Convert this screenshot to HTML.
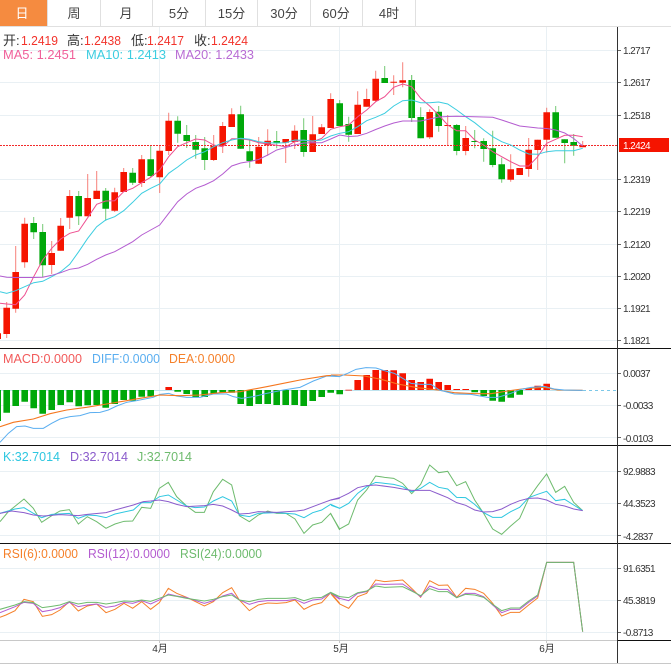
<!DOCTYPE html>
<html><head><meta charset="utf-8"><style>
html,body{margin:0;padding:0;background:#fff;width:671px;height:672px;overflow:hidden}
svg{display:block;font-family:"Liberation Sans","Noto Sans CJK SC",sans-serif}
.ax text{font-size:10px;letter-spacing:-.6px;fill:#333}
.l{fill:none;stroke-width:1}
</style></head><body>
<svg width="671" height="672" viewBox="0 0 671 672" xmlns="http://www.w3.org/2000/svg">
<rect width="671" height="672" fill="#fff"/>
<!-- tabs -->
<rect x="0" y="0" width="47" height="26" fill="#f58b40"/>
<path d="M47.5 0V26M100.5 0V26M152.5 0V26M205.5 0V26M257.5 0V26M310.5 0V26M362.5 0V26M415.5 0V26M0 26.5H671" stroke="#e0e0e0" fill="none"/>
<g font-size="13" fill="#444" text-anchor="middle">
<text x="22" y="18" fill="#fff">日</text><text x="74" y="18">周</text><text x="126" y="18">月</text><text x="179" y="18">5分</text><text x="231.5" y="18">15分</text><text x="284" y="18">30分</text><text x="336" y="18">60分</text><text x="389" y="18">4时</text>
</g>
<!-- grid -->
<path d="M0 50.5H617M0 82.5H617M0 115.5H617M0 179.5H617M0 211.5H617M0 244.5H617M0 276.5H617M0 308.5H617M0 340.5H617M0 373.5H617M0 405.5H617M0 437.5H617M0 471.5H617M0 503.5H617M0 535.5H617M0 568.5H617M0 600.5H617M0 632.5H617M159.5 27V640M339.5 27V640M546.5 27V640" stroke="#e9f0f4" fill="none"/>
<!-- candles -->
<path fill="none" stroke="#f4574f" stroke-width="1" opacity=".75" d="M6.7 302V338M15.7 246V312.7M24.7 217.7V267.7M51.7 241V274M60.7 218V250.7M69.7 190V229M87.7 174V216.3M96.7 171V199M114.7 187.7V212M123.7 168V192M141.7 155V187M159.7 145V193M168.7 112.7V155M213.7 135V161M222.7 122V153M231.7 108.3V127M258.7 137V164M267.7 129.3V155.7M285.7 139V163M294.7 125.3V149M312.7 116V152M321.7 124V134M330.7 93.3V128M357.7 91.3V134M366.7 88.7V106.7M375.7 70.7V101.7M393.7 75.3V95M402.7 62.3V87.3M429.7 109.3V139M447.7 115V145.3M465.7 126V155.3M510.7 154.3V181.7M528.7 138V176.7M537.7 139.7V170M546.7 107.7V152.7M582.7 141V147.3"/>
<path fill="none" stroke="#5cc05c" stroke-width="1" opacity=".85" d="M33.7 217V239M42.7 224V277.3M78.7 191V225M105.7 188V220.7M132.7 168V185M150.7 145.3V177M177.7 116.3V142.7M186.7 125V148M195.7 135V158.7M204.7 137V170M240.7 105.7V149M249.7 140V167.7M276.7 131V148.3M303.7 118.3V156.7M339.7 100V126M348.7 116.7V141.7M384.7 66V83M420.7 107.3V138.3M438.7 106V131.7M456.7 124V155.3M474.7 130V148.3M483.7 138.3V161.7M492.7 130.7V167.3M501.7 157.7V182.7M555.7 106V137.7M564.7 139.3V163.3M573.7 134V155.7"/>
<path fill="none" stroke="#f51400" stroke-width="6.6" d="M-2.3 333.3V339M6.7 307.7V334M15.7 272V308.7M24.7 223.7V262.3M51.7 253V265M60.7 225.7V250.7M69.7 196V217.7M87.7 198V216.3M96.7 190.7V199M114.7 192.3V210.7M123.7 172V192M141.7 159.3V183M159.7 150.7V177.3M168.7 120.7V151M213.7 145.7V160M222.7 126V145.7M231.7 114.3V127M258.7 146.7V163.7M267.7 140.7V145.3M285.7 139V142.7M294.7 130.7V142M312.7 134.3V152M321.7 127.3V134M330.7 99V128M357.7 104.7V134M366.7 99V106.7M375.7 78.7V100.7M393.7 81.8V82.8M402.7 80.3V82.7M429.7 112V137.3M447.7 125V126M465.7 138V151M510.7 169.3V179.7M519.7 168V175M528.7 149.7V169M537.7 139.7V150M546.7 112.3V139.7M582.7 145.3V147.3"/>
<path fill="none" stroke="#00a80a" stroke-width="6.6" d="M33.7 223V232.3M42.7 232V265.3M78.7 196V216.3M105.7 190.7V208.7M132.7 172.7V182.7M150.7 159.3V176M177.7 120.7V133.7M186.7 135V141M195.7 142V149.7M204.7 148.3V160M240.7 114.3V148.7M249.7 151.3V161M276.7 141V143.3M303.7 130V152M339.7 103.3V126M348.7 124V134.7M384.7 78V83M411.7 80V118M420.7 117V138.3M438.7 111.7V126M456.7 125V151M474.7 141V142M483.7 141V149M492.7 148.3V165M501.7 164.3V179.3M555.7 112.3V137.7M564.7 139.3V143M573.7 142V145.7"/>
<path fill="none" stroke="#5cc05c" d="M411.7 75V122"/>
<!-- dashed price -->
<path d="M0 145.5H617" stroke="#f22a2a" stroke-dasharray="2 1" fill="none"/>
<!-- MA -->
<polyline class="l" stroke="#ee4f90" points="0,303.3 6.7,304 15.7,304.7 24.7,295 33.7,276.7 42.7,260 51.7,248.3 60.7,239 69.7,233.3 78.7,231 87.7,217.7 96.7,204.3 105.7,201 114.7,200.7 123.7,191.7 132.7,188.3 141.7,182.7 150.7,177.3 159.7,170 168.7,156.7 177.7,146.7 186.7,142.7 195.7,139 204.7,140 213.7,145 222.7,146.7 231.7,138.7 240.7,138.7 249.7,140 258.7,142.7 267.7,144 276.7,145.3 285.7,146.7 294.7,141.7 303.7,140 312.7,141.7 321.7,138.3 330.7,129.3 339.7,126.7 348.7,125 357.7,116.7 366.7,110 375.7,101.7 384.7,96.7 393.7,87.3 402.7,84 411.7,86.7 420.7,98.3 429.7,106 438.7,115 447.7,125 456.7,130.7 465.7,130.7 474.7,140 483.7,145 492.7,151.7 501.7,156.7 510.7,161.7 519.7,166 528.7,166 537.7,156.7 546.7,143.3 555.7,139.3 564.7,135.3 573.7,135.3 582.7,136.7"/>
<polyline class="l" stroke="#3ccde0" points="0,291.7 6.7,293.3 15.7,290.7 24.7,286.7 33.7,282.7 42.7,281.3 51.7,276.7 60.7,271.7 69.7,264.3 78.7,251.7 87.7,238.3 96.7,226.7 105.7,220 114.7,216.7 123.7,210.7 132.7,202.3 141.7,193.3 150.7,188.3 159.7,184 168.7,173.3 177.7,167 186.7,160 195.7,155 204.7,151.7 213.7,146.7 222.7,142.7 231.7,140 240.7,138.3 249.7,139.3 258.7,141.7 267.7,142.7 276.7,143 285.7,142.7 294.7,140 303.7,140.3 312.7,141 321.7,140 330.7,136 339.7,133.3 348.7,131.7 357.7,126.7 366.7,120.7 375.7,117.3 384.7,113.3 393.7,106 402.7,100.7 411.7,100 420.7,102.7 429.7,102.7 438.7,102 447.7,104 456.7,110 465.7,116.7 474.7,122.7 483.7,130 492.7,136.7 501.7,141.7 510.7,145 519.7,150 528.7,154 537.7,154.3 546.7,151.7 555.7,150.7 564.7,150.7 573.7,150.7 582.7,148.3"/>
<polyline class="l" stroke="#b45cd0" points="0,276 6.7,277.3 15.7,277.5 24.7,277.5 33.7,277.5 42.7,277.3 51.7,275.3 60.7,272.7 69.7,269.3 78.7,268 87.7,264.3 96.7,259.3 105.7,255 114.7,251.7 123.7,246.7 132.7,241.7 141.7,235 150.7,230 159.7,225 168.7,213.3 177.7,201.7 186.7,194 195.7,188.3 204.7,185 213.7,180.7 222.7,174 231.7,166 240.7,163 249.7,161.5 258.7,159.5 267.7,155 276.7,150 285.7,147.5 294.7,145 303.7,143 312.7,142.7 321.7,142.7 330.7,139 339.7,135 348.7,136.5 357.7,136 366.7,133.3 375.7,129.5 384.7,126 393.7,123 402.7,121 411.7,121 420.7,121 429.7,119 438.7,117 447.7,116.5 456.7,116.3 483.7,117 492.7,117.3 501.7,120 510.7,123 519.7,126 528.7,127 537.7,128 546.7,128.5 555.7,130 564.7,133 573.7,138.5 582.7,146"/>
<!-- MACD -->
<path d="M0 390.5H583" stroke="#bfe3ee" fill="none"/>
<path d="M583 390.5H617" stroke="#7cc8e8" stroke-dasharray="3 3" fill="none"/>
<path fill="none" stroke="#00a80a" stroke-width="6.6" d="M-2.3 390V421M6.7 390V412.7M15.7 390V406M24.7 390V401.7M33.7 390V408.3M42.7 390V413.7M51.7 390V410M60.7 390V405M69.7 390V402.3M78.7 390V406.3M87.7 390V405.3M96.7 390V405M105.7 390V407.7M114.7 390V404M123.7 390V400M132.7 390V400.7M141.7 390V396.7M150.7 390V396.3M177.7 390V391.7M186.7 390V394M195.7 390V397M204.7 390V397M213.7 390V393.7M222.7 390V392.7M231.7 390V392.7M240.7 390V404M249.7 390V406M258.7 390V404M267.7 390V404M276.7 390V405M285.7 390V405M294.7 390V405M303.7 390V406M312.7 390V401M321.7 390V397M330.7 390V392.7M339.7 390V394.3M474.7 390V392.3M483.7 390V396M492.7 390V400.7M501.7 390V401.7M510.7 390V397.7M519.7 390V394.7"/>
<path fill="none" stroke="#f51400" stroke-width="6.6" d="M168.7 390V387M348.7 390.5V389.7M357.7 390V380M366.7 390V375M375.7 390V370M384.7 390V370M393.7 390V370.3M402.7 390V373.3M411.7 390V380M420.7 390V382M429.7 390V378.7M438.7 390V382M447.7 390V385M456.7 390V389M465.7 390V389M528.7 390V388.3M537.7 390V385.7M546.7 390V383.7"/>
<g transform="translate(0,345) scale(.33333)" fill="none" stroke-width="3">
<polyline stroke="#5aaef0" points="0,292 25,265 50,245 75,243 100,250 130,250 155,235 180,222 210,215 240,212 270,203 300,202 325,195 350,183 380,172 410,167 460,157 480,148 506,145 530,153 560,157 600,157 640,147 680,147 700,155 725,160 760,155 800,145 850,135 900,127 940,108 980,93 1019,95"/>
<polyline stroke="#f5761e" stroke-width="3.3" points="0,245 40,232 100,222 150,206 200,195 260,187 320,177 380,167 420,160 480,150 540,152 600,150 660,143 720,140 800,125 900,105 980,92 1019,90"/>
</g>
<g transform="translate(331,345) scale(.33333)" fill="none" stroke-width="3">
<polyline stroke="#f5761e" stroke-width="3.3" points="0,90 40,90 100,93 150,103 200,117 260,128 320,135 370,143 430,146 480,146 530,138 580,131 640,127 680,135 755,136"/>
<polyline stroke="#5aaef0" points="0,92 25,95 50,85 75,73 105,68 135,69 160,77 190,85 215,100 240,115 270,118 300,118 325,135 370,147 420,148 470,157 500,157 540,145 570,133 600,127 640,124 670,132 700,135 755,136"/>
</g>
<!-- KDJ -->
<g transform="translate(0,445) scale(.33333)" fill="none" stroke-width="3">
<polyline stroke="#6ebb6e" points="0,230 25,200 72,162 100,190 125,232 155,212 180,198 208,194 235,237 262,215 290,230 318,250 345,237 372,229 398,228 425,187 452,190 478,130 505,112 530,155 560,183 586,202 613,202 640,140 668,103 695,120 718,212 748,230 775,210 803,198 830,205 858,205 885,222 912,265 938,240 965,232 992,205 1019,255"/>
<polyline stroke="#2ec7e0" points="0,205 45,192 72,188 100,205 125,218 155,208 208,205 235,220 262,210 290,212 318,218 345,207 400,195 425,173 452,173 478,155 505,150 530,165 560,183 586,188 613,186 640,168 668,155 695,168 718,210 748,215 775,205 830,203 858,205 885,207 912,218 938,203 965,195 992,178 1019,190"/>
<polyline stroke="#8b5ccc" points="0,205 35,198 72,203 100,210 130,213 180,209 235,212 262,208 318,203 345,195 400,180 430,170 452,168 478,165 505,170 530,178 560,185 613,182 640,178 668,183 695,195 718,207 748,205 775,200 830,202 890,198 912,195 965,175 992,165 1019,160"/>
</g>
<g transform="translate(331,445) scale(.33333)" fill="none" stroke-width="3">
<polyline stroke="#6ebb6e" points="0,208 26,252 53,237 80,165 107,135 134,93 161,97 188,100 215,115 242,146 269,118 296,60 323,83 350,79 377,122 404,110 431,165 458,205 485,252 512,268 539,243 566,220 593,160 620,122 647,87 674,142 701,124 728,172 755,197"/>
<polyline stroke="#2ec7e0" points="0,181 26,190 53,175 80,145 107,125 134,112 161,115 188,118 215,125 242,140 269,130 296,112 323,127 350,132 377,157 404,158 431,178 458,203 485,217 512,217 539,200 566,187 593,158 620,148 647,139 674,167 701,163 728,180 755,197"/>
<polyline stroke="#8b5ccc" points="0,165 26,158 53,145 80,128 107,122 134,120 188,127 215,132 242,136 296,136 323,147 350,158 377,173 404,181 431,195 458,201 485,200 512,192 539,178 566,167 593,160 620,159 647,165 674,178 701,183 728,192 755,197"/>
</g>
<!-- RSI -->
<g transform="translate(0,540) scale(.33333)" fill="none" stroke-width="3">
<polyline stroke="#f5802a" points="0,232 18,225 45,212 72,178 100,185 127,229 155,224 180,210 208,185 235,213 262,198 290,192 318,218 345,208 372,190 398,205 425,185 452,208 478,188 505,145 530,160 560,172 613,198 640,185 668,158 695,143 718,180 748,212 775,195 803,189 830,190 858,188 885,180 912,208 938,195 965,188 992,158 1019,190"/>
<polyline stroke="#b45cd0" points="0,218 45,200 72,187 100,190 127,215 155,210 180,203 208,187 235,200 262,195 290,192 318,202 345,198 372,187 398,190 425,182 452,192 478,180 505,162 530,168 560,173 613,190 640,182 668,168 695,160 718,180 748,193 775,185 803,182 858,182 885,178 912,190 938,180 965,177 992,158 1019,178"/>
<polyline stroke="#6ebb6e" points="0,208 45,195 72,185 100,188 127,203 155,199 180,195 208,185 235,192 262,187 290,187 318,192 345,188 372,183 398,184 425,180 452,184 478,175 505,165 530,169 560,175 613,183 640,178 668,170 695,165 718,180 748,185 775,178 803,175 858,175 885,173 912,182 938,174 965,172 992,157 1019,170"/>
</g>
<g transform="translate(331,540) scale(.33333)" fill="none" stroke-width="3">
<polyline stroke="#f5802a" points="0,162 26,192 53,205 80,170 107,160 134,120 161,125 215,120 242,145 269,172 296,122 323,136 350,135 377,172 404,145 431,148 458,160 485,190 512,228 539,217 566,217 593,195 620,174 647,67 728,67 755,275"/>
<polyline stroke="#b45cd0" points="0,160 26,175 53,182 80,160 107,155 134,132 161,133 215,132 242,150 269,170 296,138 323,148 350,148 377,173 404,160 431,160 458,170 485,195 512,218 539,208 566,208 593,187 620,168 647,67 728,67 755,275"/>
<polyline stroke="#6ebb6e" points="0,160 26,170 53,173 80,158 107,153 134,138 161,142 215,140 242,153 269,167 296,146 323,155 350,155 377,173 404,163 431,165 458,172 485,193 512,212 539,204 566,204 593,183 620,165 647,67 728,67 755,275"/>
</g>
<!-- frame -->
<path d="M0 348.5H671M0 445.5H671M0 543.5H671M617 640.5H671" stroke="#111" fill="none"/>
<path d="M0 640.5H617M159.5 640V643M339.5 640V643M546.5 640V643M0 663.5H671" stroke="#c8c8c8" fill="none"/>
<path d="M617.5 27V663" stroke="#333" fill="none"/>
<path d="M618 50.5H621M618 82.5H621M618 115.5H621M618 179.5H621M618 211.5H621M618 244.5H621M618 276.5H621M618 308.5H621M618 340.5H621M618 373.5H621M618 405.5H621M618 437.5H621M618 471.5H621M618 503.5H621M618 535.5H621M618 568.5H621M618 600.5H621M618 632.5H621" stroke="#666" fill="none"/>
<rect x="619" y="138" width="50" height="14" fill="#f51400"/>
<!-- axis labels -->
<g class="ax">
<text x="623" y="54">1.2717</text><text x="623" y="86">1.2617</text><text x="623" y="119">1.2518</text><text x="623" y="149" style="fill:#fff">1.2424</text><text x="623" y="183">1.2319</text><text x="623" y="215">1.2219</text><text x="623" y="248">1.2120</text><text x="623" y="280">1.2020</text><text x="623" y="312">1.1921</text><text x="623" y="344">1.1821</text>
<text x="623" y="377">0.0037</text><text x="623" y="409">-0.0033</text><text x="623" y="442">-0.0103</text>
<text x="623" y="475">92.9883</text><text x="623" y="507">44.3523</text><text x="623" y="540">-4.2837</text>
<text x="623" y="572">91.6351</text><text x="623" y="604">45.3819</text><text x="623" y="636">-0.8713</text>
</g>
<g font-size="10" fill="#333" text-anchor="middle"><text x="160" y="652">4月</text><text x="341" y="652">5月</text><text x="547" y="652">6月</text></g>
<!-- legends -->
<g font-size="13">
<text x="3" y="45" fill="#333">开:</text><text x="21" y="45" fill="#f2332b" textLength="37" lengthAdjust="spacingAndGlyphs">1.2419</text>
<text x="67" y="45" fill="#333">高:</text><text x="84" y="45" fill="#f2332b" textLength="37" lengthAdjust="spacingAndGlyphs">1.2438</text>
<text x="131" y="45" fill="#333">低:</text><text x="147" y="45" fill="#f2332b" textLength="37" lengthAdjust="spacingAndGlyphs">1.2417</text>
<text x="194" y="45" fill="#333">收:</text><text x="211" y="45" fill="#f2332b" textLength="37" lengthAdjust="spacingAndGlyphs">1.2424</text>
<text x="3" y="59" fill="#f0609a" textLength="73" lengthAdjust="spacingAndGlyphs">MA5: 1.2451</text><text x="86" y="59" fill="#3ccde0" textLength="80" lengthAdjust="spacingAndGlyphs">MA10: 1.2413</text><text x="175" y="59" fill="#b86cd4" textLength="79" lengthAdjust="spacingAndGlyphs">MA20: 1.2433</text>
<text x="3" y="363" fill="#f25a5a" textLength="79" lengthAdjust="spacingAndGlyphs">MACD:0.0000</text><text x="92" y="363" fill="#5aaef0" textLength="68" lengthAdjust="spacingAndGlyphs">DIFF:0.0000</text><text x="169" y="363" fill="#f5802a" textLength="66" lengthAdjust="spacingAndGlyphs">DEA:0.0000</text>
<text x="3" y="461" fill="#2ec7e0" textLength="57" lengthAdjust="spacingAndGlyphs">K:32.7014</text><text x="70" y="461" fill="#8b5ccc" textLength="58" lengthAdjust="spacingAndGlyphs">D:32.7014</text><text x="137" y="461" fill="#6ebb6e" textLength="55" lengthAdjust="spacingAndGlyphs">J:32.7014</text>
<text x="3" y="558" fill="#f5802a" textLength="75" lengthAdjust="spacingAndGlyphs">RSI(6):0.0000</text><text x="88" y="558" fill="#b45cd0" textLength="82" lengthAdjust="spacingAndGlyphs">RSI(12):0.0000</text><text x="180" y="558" fill="#6ebb6e" textLength="82" lengthAdjust="spacingAndGlyphs">RSI(24):0.0000</text>
</g>
</svg>
</body></html>
